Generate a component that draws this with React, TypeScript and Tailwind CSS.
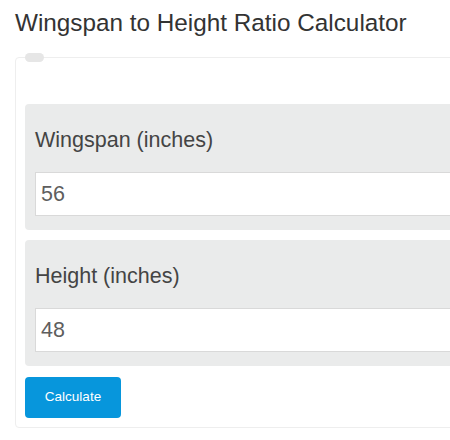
export default function App() {
  const fields = [
    { label: 'Wingspan (inches)', value: '56' },
    { label: 'Height (inches)', value: '48' },
  ];

  return (
    <div
      className="w-[450px] h-[440px] overflow-hidden bg-white pl-[15px] pt-[8px]"
      style={{ fontFamily: '"Liberation Sans", Arial, sans-serif' }}
    >
      <h1 className="text-[24.3px] leading-[30px] text-[#333] font-normal">
        Wingspan to Height Ratio Calculator
      </h1>

      {/* Calculator box */}
      <div className="relative mt-[19px] w-[470px] border border-[#eeeeee] rounded-[4px] pl-[9px] pt-[46px] pb-[9px]">
        <span className="absolute left-[9px] -top-[5px] w-[19px] h-[9px] rounded-full bg-[#e6e6e6]" />

        <div className="flex flex-col gap-[10px] w-[480px]">
          {fields.map((f) => (
            <div
              key={f.label}
              className="bg-[#eaebeb] rounded-[4px] pl-[10px] pt-[22px] pb-[14px]"
            >
              <div className="text-[21.5px] leading-[28px] text-[#444]">{f.label}</div>
              <div className="mt-[18px] h-[44px] bg-white border border-[#d9d9d9] flex items-center pl-[5px] text-[21.5px] text-[#5e5e5e]">
                {f.value}
              </div>
            </div>
          ))}
        </div>

        <button className="mt-[11px] w-[96px] h-[41px] rounded-[4px] bg-[#0796dc] text-white text-[13.5px]">
          Calculate
        </button>
      </div>
    </div>
  );
}
